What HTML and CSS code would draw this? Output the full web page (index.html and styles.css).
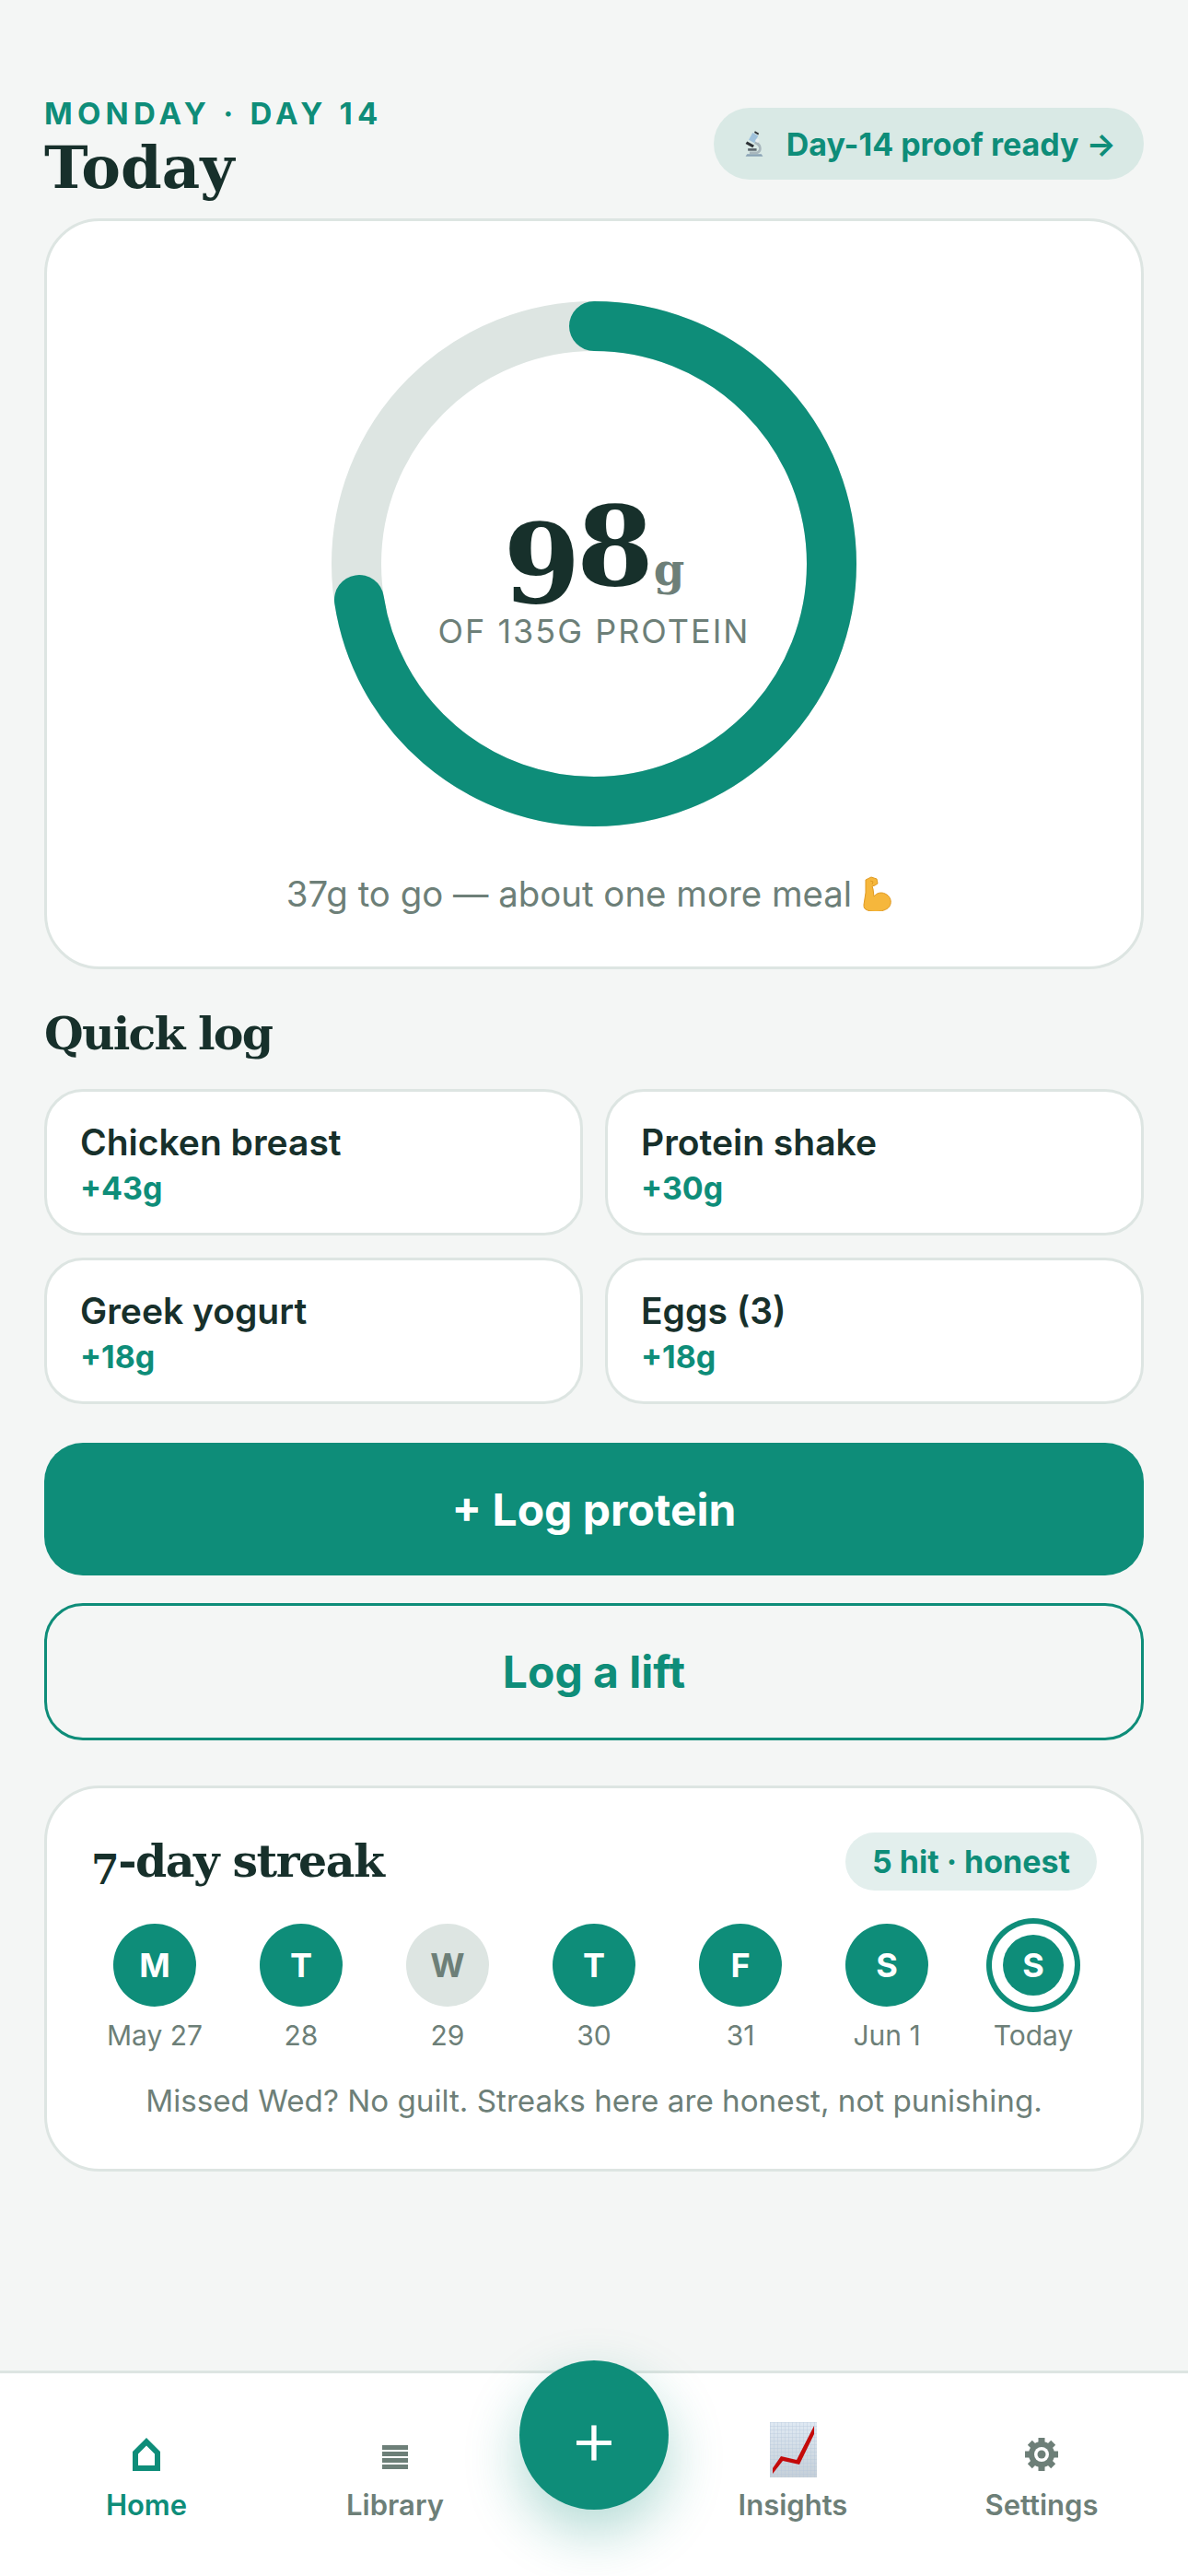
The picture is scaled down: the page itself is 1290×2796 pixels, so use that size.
FILE: index.html
```html
<!DOCTYPE html>
<html lang="en">
<head>
  <meta charset="UTF-8">
  <meta name="viewport" content="width=device-width, initial-scale=1">
  <title>Today</title>
  <link rel="stylesheet" href="styles.css">
</head>
<body>
  <main class="content">
    <header class="top">
      <div>
        <div class="eyebrow">MONDAY · DAY 14</div>
        <h1>Today</h1>
      </div>
      <div class="proof-pill">
        <svg class="scope" viewBox="0 0 28 34">
          <path d="M3 33l2-3h18l2 3z" fill="#8aa3b5"/>
          <path d="M15 14c6 1 8 5 8 9 0 4-3 7-7 7H8v-3h8c2 0 4-2 4-4s-2-5-6-6z" fill="#a9b7bd"/>
          <path d="M12 3l7 4-5 9-7-4z" fill="#9fc2dc"/>
          <path d="M5 14l9 5-2 3-9-5z" fill="#2d3236"/>
          <path d="M15 1l5 3-1 2-5-3z" fill="#2d3236"/>
          <circle cx="18" cy="13" r="2.4" fill="#e8edef"/>
          <rect x="6" y="23" width="11" height="3" fill="#59636a"/>
        </svg>
        <span>Day-14 proof ready →</span>
      </div>
    </header>

    <section class="card ring-card">
      <div class="ring">
        <svg viewBox="0 0 570 570">
          <circle cx="285" cy="285" r="258" fill="none" stroke="#dde5e2" stroke-width="54"/>
          <circle cx="285" cy="285" r="258" fill="none" stroke="#0e8d79" stroke-width="54" stroke-linecap="round" stroke-dasharray="1176 1621" transform="rotate(-90 285 285)"/>
        </svg>
        <div class="ring-text">
          <div class="amount"><span class="low-digit">9</span>8<span class="unit">g</span></div>
          <div class="amount-label">OF 135G PROTEIN</div>
        </div>
      </div>
      <p class="to-go">37g to go — about one more meal
        <svg class="arm" viewBox="0 0 36 38">
          <path d="M7 4l6-3 6 2 1 5-3 2-3 1 1 3 1 8c3-4 8-5 12-3 5 2 7 7 6 11-1 5-6 7-11 8-6 1-13 0-16-2-2-1-2-3-2-5l2-13z" fill="#f6b73c" stroke="#e09a22" stroke-width="1"/>
          <path d="M12 5l3 1-1 3" fill="none" stroke="#e09a22" stroke-width="1"/>
        </svg>
      </p>
    </section>

    <h2 class="section-title">Quick log</h2>
    <section class="quick-grid">
      <div class="quick-item"><div class="quick-name">Chicken breast</div><div class="quick-grams">+43g</div></div>
      <div class="quick-item"><div class="quick-name">Protein shake</div><div class="quick-grams">+30g</div></div>
      <div class="quick-item"><div class="quick-name">Greek yogurt</div><div class="quick-grams">+18g</div></div>
      <div class="quick-item"><div class="quick-name">Eggs (3)</div><div class="quick-grams">+18g</div></div>
    </section>

    <button class="btn btn-main">+ Log protein</button>
    <button class="btn btn-line">Log a lift</button>

    <section class="card streak">
      <div class="streak-head">
        <h2 class="section-title streak-title"><span class="low-seven">7</span>-day streak</h2>
        <span class="chip">5 hit · honest</span>
      </div>
      <div class="days">
        <div class="day"><span class="dot">M</span><span class="day-label">May 27</span></div>
        <div class="day"><span class="dot">T</span><span class="day-label">28</span></div>
        <div class="day"><span class="dot missed">W</span><span class="day-label">29</span></div>
        <div class="day"><span class="dot">T</span><span class="day-label">30</span></div>
        <div class="day"><span class="dot">F</span><span class="day-label">31</span></div>
        <div class="day"><span class="dot">S</span><span class="day-label">Jun 1</span></div>
        <div class="day"><span class="dot now">S</span><span class="day-label">Today</span></div>
      </div>
      <p class="streak-note">Missed Wed? No guilt. Streaks here are honest, not punishing.</p>
    </section>
  </main>

  <nav class="tabbar">
    <div class="tab active">
      <div class="tab-slot">
        <svg class="icon-home" viewBox="0 0 30 36"><path d="M0 36V15L15 0l15 15v21zM6 30h18V17.500L15 8.500 6 17.500z" fill="#0e8d79" fill-rule="evenodd"/></svg>
      </div>
      <span>Home</span>
    </div>
    <div class="tab">
      <div class="tab-slot">
        <svg class="icon-library" viewBox="0 0 28 26"><path d="M0 0h28v5H0zM0 7h28v5H0zM0 14h28v5H0zM0 21h28v5H0z" fill="#6d7f78"/></svg>
      </div>
      <span>Library</span>
    </div>
    <div class="tab-gap"></div>
    <div class="tab">
      <div class="tab-slot">
        <svg class="icon-chart" viewBox="0 0 51 60">
          <defs>
            <linearGradient id="chartBg" x1="0" y1="0" x2="0" y2="1">
              <stop offset="0" stop-color="#dfe9f3"/>
              <stop offset="1" stop-color="#c6d0d8"/>
            </linearGradient>
            <pattern id="chartGrid" width="4" height="4" patternUnits="userSpaceOnUse">
              <path d="M4 0H0V4" fill="none" stroke="#b4c6d8" stroke-width="0.7"/>
            </pattern>
          </defs>
          <rect width="51" height="60" fill="url(#chartBg)"/>
          <rect width="51" height="60" fill="url(#chartGrid)"/>
          <path d="M3 56V50L12 37l17 4L48 4v9L32 46 14 42z" fill="#c40a0a"/>
        </svg>
      </div>
      <span>Insights</span>
    </div>
    <div class="tab">
      <div class="tab-slot">
        <svg class="icon-gear" viewBox="0 0 36 36">
          <g stroke="#6d7f78" stroke-width="7">
            <path d="M18 0v36M0 18h36M5.300 5.300l25.400 25.400M30.700 5.300L5.300 30.700"/>
          </g>
          <circle cx="18" cy="18" r="14" fill="#6d7f78"/>
          <circle cx="18" cy="18" r="8" fill="#fff"/>
          <circle cx="18" cy="18" r="4.500" fill="#6d7f78"/>
        </svg>
      </div>
      <span>Settings</span>
    </div>
    <button class="fab">+</button>
  </nav>
</body>
</html>
```

FILE: styles.css
```css
:root {
  --bg: #f4f6f5;
  --teal: #0e8d79;
  --ink: #17302b;
  --muted: #6d7f78;
  --line: #dde5e2;
  --serif: "DejaVu Serif", "Liberation Serif", serif;
}
* { box-sizing: border-box; }
html, body { margin: 0; padding: 0; }
body {
  width: 1290px;
  height: 2796px;
  display: flex;
  flex-direction: column;
  overflow: hidden;
  background-color: var(--bg);
  color: var(--ink);
  font-family: Inter, "Liberation Sans", sans-serif;
}
.content {
  flex: 1;
  padding: 105px 48px 0;
}
.top {
  display: flex;
  justify-content: space-between;
  align-items: flex-start;
}
.eyebrow {
  font-size: 33px;
  line-height: 36px;
  font-weight: 700;
  letter-spacing: 5.2px;
  color: var(--teal);
}
h1 {
  margin: -1px 0 0;
  font-family: var(--serif);
  font-size: 64px;
  line-height: 84px;
  letter-spacing: 0;
  font-weight: 700;
}
.proof-pill {
  display: flex;
  align-items: center;
  gap: 23px;
  height: 78px;
  margin-top: 12px;
  padding: 0 30px 0 32px;
  border-radius: 39px;
  background-color: #d9e9e5;
  color: var(--teal);
  font-size: 34px;
  font-weight: 700;
}
.scope { width: 24px; height: 32px; }
.card {
  background-color: #fff;
  border: 3px solid var(--line);
  border-radius: 60px;
}
.ring-card {
  margin-top: 13px;
  height: 815px;
  padding-top: 87px;
  display: flex;
  flex-direction: column;
  align-items: center;
}
.ring {
  position: relative;
  width: 570px;
  height: 570px;
}
.ring svg { display: block; width: 570px; height: 570px; }
.ring-text {
  position: absolute;
  inset: 0;
  padding-top: 201px;
  display: flex;
  flex-direction: column;
  align-items: center;
}
.amount {
  font-family: var(--serif);
  font-size: 120px;
  line-height: 130px;
  letter-spacing: -4px;
  font-weight: 700;
}
.low-digit {
  line-height: 0;
  vertical-align: -19px;
}
.unit {
  margin-left: 4px;
  font-size: 48px;
  line-height: 0;
  letter-spacing: 0;
  color: var(--muted);
}
.amount-label {
  margin-top: 7px;
  font-size: 36px;
  line-height: 40px;
  letter-spacing: 2px;
  color: var(--muted);
}
.to-go {
  margin: 49px 10px 0 0;
  font-size: 38.400px;
  line-height: 48px;
  color: var(--muted);
  display: flex;
  align-items: center;
  gap: 8px;
}
.arm { width: 36px; height: 38px; }
.section-title {
  margin: 0;
  font-family: var(--serif);
  font-size: 49px;
  line-height: 66px;
  letter-spacing: -1.800px;
  font-weight: 700;
}
.content > .section-title { margin-top: 37px; }
.streak-title { letter-spacing: -1.500px; }
.low-seven {
  font-size: 44px;
  line-height: 0;
  vertical-align: -8px;
}
.quick-grid {
  margin-top: 27px;
  display: grid;
  grid-template-columns: 1fr 1fr;
  gap: 24px;
}
.quick-item {
  height: 159px;
  padding: 31px 36px;
  background-color: #fff;
  border: 3px solid var(--line);
  border-radius: 42px;
}
.quick-name {
  font-size: 39px;
  line-height: 48px;
  font-weight: 600;
}
.quick-grams {
  margin-top: 6px;
  font-size: 34px;
  line-height: 40px;
  font-weight: 700;
  color: var(--teal);
}
.btn {
  display: block;
  width: 100%;
  border-radius: 42px;
  font-family: inherit;
  font-size: 48px;
  font-weight: 700;
}
.btn-main {
  margin-top: 42px;
  height: 144px;
  border: none;
  background-color: var(--teal);
  color: #fff;
}
.btn-line {
  margin-top: 30px;
  height: 149px;
  border: 3px solid var(--teal);
  background-color: transparent;
  color: var(--teal);
}
.streak {
  margin-top: 49px;
  height: 419px;
  padding: 46px 48px 0;
}
.streak-head {
  display: flex;
  justify-content: space-between;
  align-items: center;
}
.chip {
  height: 63px;
  line-height: 63px;
  padding: 0 29px;
  border-radius: 32px;
  background-color: #e3efed;
  color: var(--teal);
  font-size: 34px;
  font-weight: 700;
}
.days {
  margin-top: 35px;
  display: grid;
  grid-template-columns: repeat(7, 138px);
  gap: 21px;
}
.day {
  display: flex;
  flex-direction: column;
  align-items: center;
}
.dot {
  width: 90px;
  height: 90px;
  border-radius: 50%;
  background-color: var(--teal);
  color: #fff;
  font-size: 36px;
  font-weight: 700;
  display: flex;
  align-items: center;
  justify-content: center;
}
.dot.missed {
  background-color: var(--line);
  color: var(--muted);
}
.dot.now {
  width: 66px;
  height: 66px;
  margin: 12px;
  box-shadow: 0 0 0 12px #fff, 0 0 0 18px var(--teal);
}
.day-label {
  margin-top: 11px;
  font-size: 30px;
  line-height: 40px;
  color: var(--muted);
}
.streak-note {
  margin: 29px 0 0;
  text-align: center;
  font-size: 33.200px;
  line-height: 44px;
  color: var(--muted);
}
.tabbar {
  position: relative;
  height: 223px;
  padding: 0 24px 57px;
  background-color: #fff;
  border-top: 3px solid var(--line);
  display: flex;
  align-items: flex-end;
}
.tab {
  flex: 1;
  display: flex;
  flex-direction: column;
  align-items: center;
  gap: 10px;
  color: var(--muted);
  font-size: 31px;
  line-height: 40px;
  font-weight: 600;
}
.tab.active { color: var(--teal); }
.tab-slot {
  height: 60px;
  display: flex;
  align-items: center;
}
.icon-home { width: 30px; height: 36px; margin-top: 10px; }
.icon-library { width: 28px; height: 26px; margin-top: 16px; }
.icon-chart { width: 51px; height: 60px; }
.icon-gear { width: 36px; height: 36px; margin-top: 9px; }
.tab-gap { width: 162px; }
.fab {
  position: absolute;
  left: 564px;
  top: -14px;
  width: 162px;
  height: 162px;
  padding: 4px 0 0;
  border: none;
  border-radius: 50%;
  background-color: var(--teal);
  color: #fff;
  font-family: inherit;
  font-size: 84px;
  font-weight: 300;
  line-height: 1;
  box-shadow: 0 24px 60px rgba(14, 141, 121, 0.32);
}
```
